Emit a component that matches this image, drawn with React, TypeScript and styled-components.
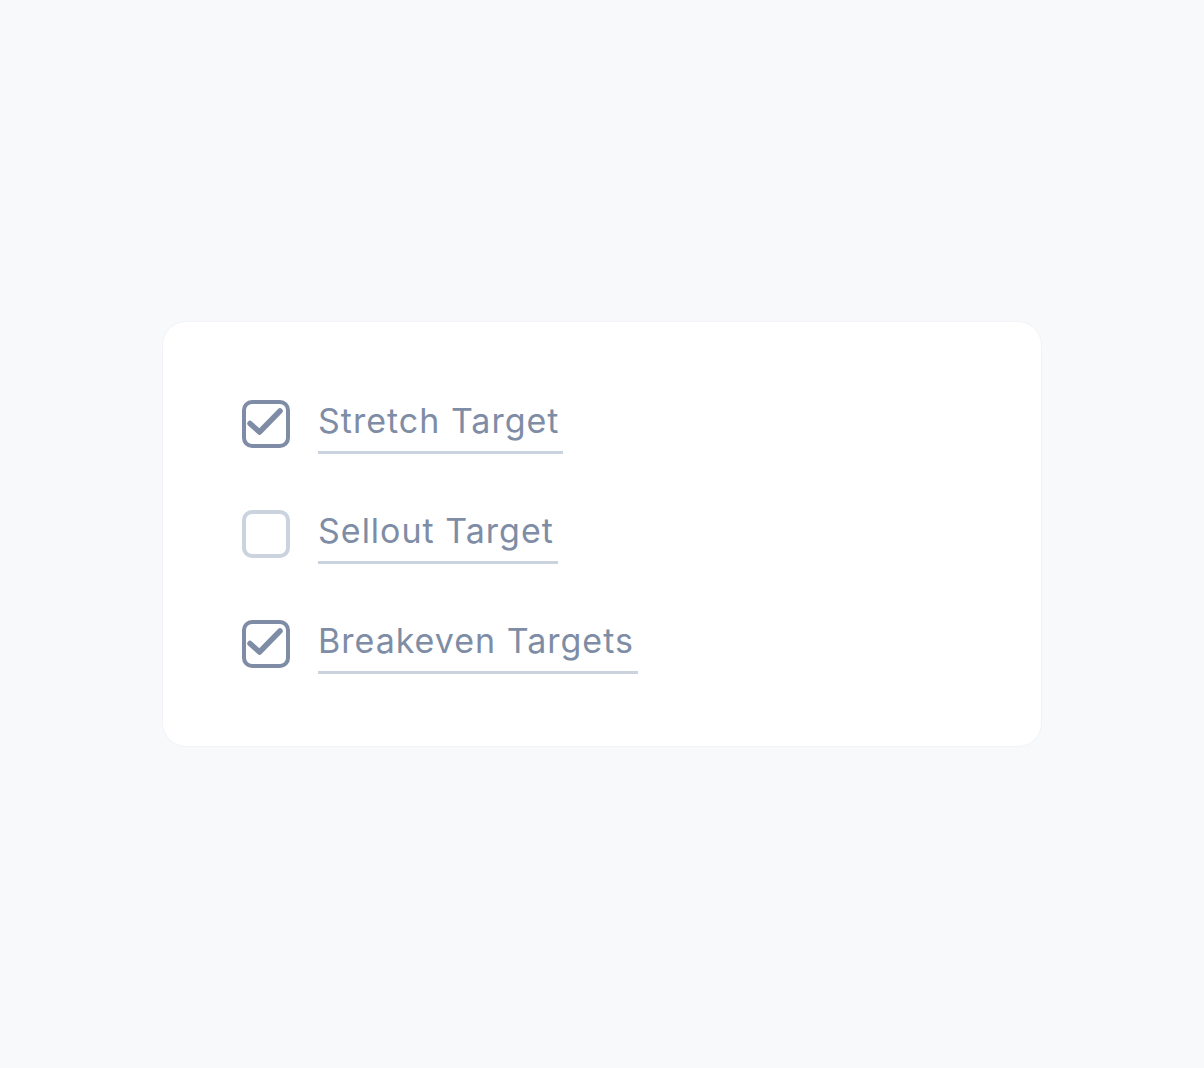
import styled, { createGlobalStyle } from 'styled-components';

const GlobalStyle = createGlobalStyle`
	html, body {
		margin: 0;
		padding: 0;
		background: #f8f9fb;
	}
	body {
		font-family: 'Inter', 'Liberation Sans', sans-serif;
	}
`;

const targets = [
	{ label: 'Stretch Target', checked: true },
	{ label: 'Sellout Target', checked: false },
	{ label: 'Breakeven Targets', checked: true },
];

export default function App() {
	return (
		<>
			<GlobalStyle />
			<Page>
				<Card>
					{targets.map((target) => (
						<Row key={target.label}>
							<Box $checked={target.checked}>
								{target.checked && (
									<CheckMark viewBox='0 0 48 48'>
										<polyline
											points='8,23.5 17.5,32 38,11'
											fill='none'
											stroke='#7e8da5'
											strokeWidth='5.5'
											strokeLinecap='round'
											strokeLinejoin='round'
										/>
									</CheckMark>
								)}
							</Box>
							<Label>{target.label}</Label>
						</Row>
					))}
				</Card>
			</Page>
		</>
	);
}

const Page = styled.div`
	width: 1204px;
	height: 1068px;
	display: flex;
	align-items: flex-start;
	justify-content: center;
	padding-top: 321px;
	box-sizing: border-box;
`;

const Card = styled.div`
	width: 880px;
	height: 426px;
	box-sizing: border-box;
	background: #ffffff;
	border: 1px solid #f1f3f6;
	border-radius: 24px;
	padding: 78px 79px;
	display: flex;
	flex-direction: column;
	gap: 62px;
`;

const Row = styled.div`
	display: flex;
	align-items: flex-start;
	gap: 28px;
	height: 48px;
`;

const Box = styled.div<{ $checked: boolean }>`
	position: relative;
	width: 48px;
	height: 48px;
	box-sizing: border-box;
	flex-shrink: 0;
	border: 4px solid ${(p) => (p.$checked ? '#7e8da5' : '#cad3de')};
	border-radius: 10px;
`;

const CheckMark = styled.svg`
	position: absolute;
	top: -4px;
	left: -4px;
	width: 48px;
	height: 48px;
`;

const Label = styled.span`
	font-family: 'Inter', 'Liberation Sans', sans-serif;
	font-size: 34px;
	line-height: 42px;
	color: #7e8da5;
	padding: 0 4px 9px 0;
	border-bottom: 3px solid #cad3de;
	letter-spacing: 1px;
`;
